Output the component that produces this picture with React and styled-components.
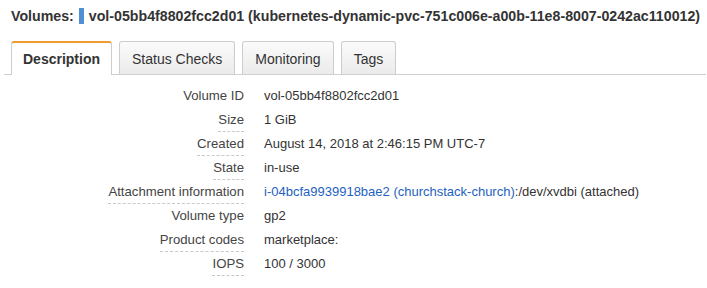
import { Fragment } from "react";
import styled, { createGlobalStyle } from "styled-components";

const GlobalStyle = createGlobalStyle`
  body {
    margin: 0;
    background: #fff;
    font-family: "Liberation Sans", Helvetica, Arial, sans-serif;
    color: #333;
  }
`;

const Page = styled.div`
  width: 707px;
  height: 288px;
  overflow: hidden;
`;

const Header = styled.h1`
  margin: 0;
  padding: 4px 0 0 11px;
  height: 24px;
  display: flex;
  align-items: center;
  font-size: 14.2px;
  line-height: 20px;
  font-weight: 700;
  color: #333;
  white-space: nowrap;
`;

const Marker = styled.span`
  display: inline-block;
  width: 5px;
  height: 16px;
  margin: 0 5px;
  background: #4f8fd3;
`;

const TabStrip = styled.div`
  display: flex;
  gap: 7px;
  margin: 13px 1px 0 4px;
  padding-left: 7px;
  border-bottom: 1px solid #cfcfcf;
  height: 33px;
`;

const Tab = styled.div`
  box-sizing: border-box;
  height: ${({ $active }) => ($active ? "34px" : "33px")};
  padding: 0 ${({ $active }) => ($active ? "11px" : "12px")};
  display: flex;
  align-items: center;
  font-size: 14px;
  font-weight: ${({ $active }) => ($active ? 700 : 400)};
  color: #333;
  border: 1px solid #cdcdcd;
  border-bottom: none;
  border-top: ${({ $active }) =>
    $active ? "2px solid #f29b2e" : "1px solid #cdcdcd"};
  border-radius: 3px 3px 0 0;
  background: ${({ $active }) =>
    $active ? "#fff" : "linear-gradient(#fbfbfb, #ebebeb)"};
  padding-top: ${({ $active }) => ($active ? "0" : "1px")};
`;

const Details = styled.div`
  display: grid;
  grid-template-columns: 244px 1fr;
  grid-auto-rows: 24px;
  column-gap: 20px;
  margin-top: 9px;
`;

const LabelCell = styled.div`
  padding-top: 4px;
  text-align: right;
  font-size: 13.2px;
  color: #444;
`;

const Label = styled.span`
  display: inline-block;
  line-height: 16px;
  padding-bottom: 3px;
  border-bottom: 1px dashed
    ${({ $hint }) => ($hint ? "#c9c9c9" : "transparent")};
  white-space: nowrap;
`;

const Value = styled.div`
  padding-top: 4px;
  line-height: 16px;
  font-size: 13px;
  color: #333;
  white-space: nowrap;
`;

const Link = styled.a`
  color: #1e62c0;
  text-decoration: none;
`;

const rows = [
  { label: "Volume ID", value: "vol-05bb4f8802fcc2d01" },
  { label: "Size", value: "1 GiB", hint: true },
  { label: "Created", value: "August 14, 2018 at 2:46:15 PM UTC-7", hint: true },
  { label: "State", value: "in-use", hint: true },
  {
    label: "Attachment information",
    hint: true,
    value: (
      <>
        <Link href="#">i-04bcfa9939918bae2 (churchstack-church)</Link>
        :/dev/xvdbi (attached)
      </>
    ),
  },
  { label: "Volume type", value: "gp2" },
  { label: "Product codes", value: "marketplace:", hint: true },
  { label: "IOPS", value: "100 / 3000", hint: true },
];

const tabs = ["Description", "Status Checks", "Monitoring", "Tags"];

export default function App() {
  return (
    <Page>
      <GlobalStyle />
      <Header>
        Volumes:
        <Marker />
        vol-05bb4f8802fcc2d01
        (kubernetes-dynamic-pvc-751c006e-a00b-11e8-8007-0242ac110012)
      </Header>
      <TabStrip>
        {tabs.map((t, i) => (
          <Tab key={t} $active={i === 0}>
            {t}
          </Tab>
        ))}
      </TabStrip>
      <Details>
        {rows.map((r) => (
          <Fragment key={r.label}>
            <LabelCell>
              <Label $hint={r.hint}>{r.label}</Label>
            </LabelCell>
            <Value>{r.value}</Value>
          </Fragment>
        ))}
      </Details>
    </Page>
  );
}
